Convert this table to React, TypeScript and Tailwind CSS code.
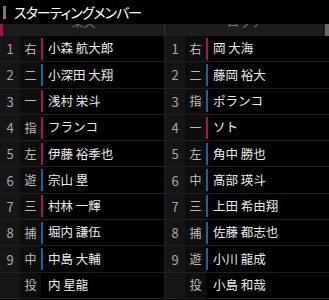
const PINK = "bg-[#a3175c]";
const BLUE = "bg-[#1d62a0]";

type Player = { no: string; pos: string; name: string; hand: "p" | "b" | null };

const home: Player[] = [
  { no: "1", pos: "右", name: "小森 航大郎", hand: "p" },
  { no: "2", pos: "二", name: "小深田 大翔", hand: "b" },
  { no: "3", pos: "一", name: "浅村 栄斗", hand: "p" },
  { no: "4", pos: "指", name: "フランコ", hand: "p" },
  { no: "5", pos: "左", name: "伊藤 裕季也", hand: "p" },
  { no: "6", pos: "遊", name: "宗山 塁", hand: "b" },
  { no: "7", pos: "三", name: "村林 一輝", hand: "p" },
  { no: "8", pos: "捕", name: "堀内 謙伍", hand: "b" },
  { no: "9", pos: "中", name: "中島 大輔", hand: "b" },
  { no: "", pos: "投", name: "内 星龍", hand: null },
];

const away: Player[] = [
  { no: "1", pos: "右", name: "岡 大海", hand: "p" },
  { no: "2", pos: "二", name: "藤岡 裕大", hand: "b" },
  { no: "3", pos: "指", name: "ポランコ", hand: "b" },
  { no: "4", pos: "一", name: "ソト", hand: "p" },
  { no: "5", pos: "左", name: "角中 勝也", hand: "b" },
  { no: "6", pos: "中", name: "髙部 瑛斗", hand: "b" },
  { no: "7", pos: "三", name: "上田 希由翔", hand: "b" },
  { no: "8", pos: "捕", name: "佐藤 都志也", hand: "b" },
  { no: "9", pos: "遊", name: "小川 龍成", hand: "b" },
  { no: "", pos: "投", name: "小島 和哉", hand: null },
];

const Row = ({ p }: { p: Player }) => (
  <div className="flex h-[26.3px] items-center border-b border-[#1f1f1f]">
    <div className="flex h-full w-[20px] items-center justify-center bg-[#151515] text-[13px] text-[#a8a8a8]">
      {p.no}
    </div>
    <div className="flex h-full w-[21px] items-center justify-center bg-[#0d0d0d] text-[12px] text-[#bdbdbd]">
      {p.pos}
    </div>
    <div className={`h-[22px] w-[2px] ${p.hand === "p" ? PINK : p.hand === "b" ? BLUE : ""}`} />
    <div className="pl-[5px] text-[12.5px] text-[#ececec] whitespace-nowrap">{p.name}</div>
  </div>
);

export default function App() {
  return (
    <div className="h-[300px] w-[329px] overflow-hidden bg-black font-['Noto_Sans_CJK_JP',sans-serif] leading-none">
      {/* title */}
      <div className="flex h-[24px] items-center gap-[8px] pl-[3px]">
        <div className="h-[13px] w-[3px] bg-[#7a7a7a]" />
        <span className="text-[14px] tracking-[-1px] text-white [font-feature-settings:'palt']">スターティングメンバー</span>
      </div>

      {/* team header, partly hidden under the title */}
      <div className="flex h-[12px] bg-[#1c1c1c]">
        <div className="flex w-[164px] overflow-hidden">
          <div className="w-[3px] bg-[#a3124f]" />
          <div className="flex-1 text-center text-[12px] leading-[12px] text-[#777] -mt-[8px]">楽天</div>
        </div>
        <div className="flex flex-1 overflow-hidden border-l border-[#333]">
          <div className="flex-1 text-center text-[12px] leading-[12px] text-[#777] -mt-[8px]">ロッテ</div>
          <div className="w-[4px] bg-[#666]" />
        </div>
      </div>

      <div className="flex">
        <div className="w-[164px]">
          {home.map((p) => (
            <Row key={p.pos + p.name} p={p} />
          ))}
        </div>
        <div className="flex-1 border-l border-[#1f1f1f]">
          {away.map((p) => (
            <Row key={p.pos + p.name} p={p} />
          ))}
        </div>
      </div>
    </div>
  );
}
